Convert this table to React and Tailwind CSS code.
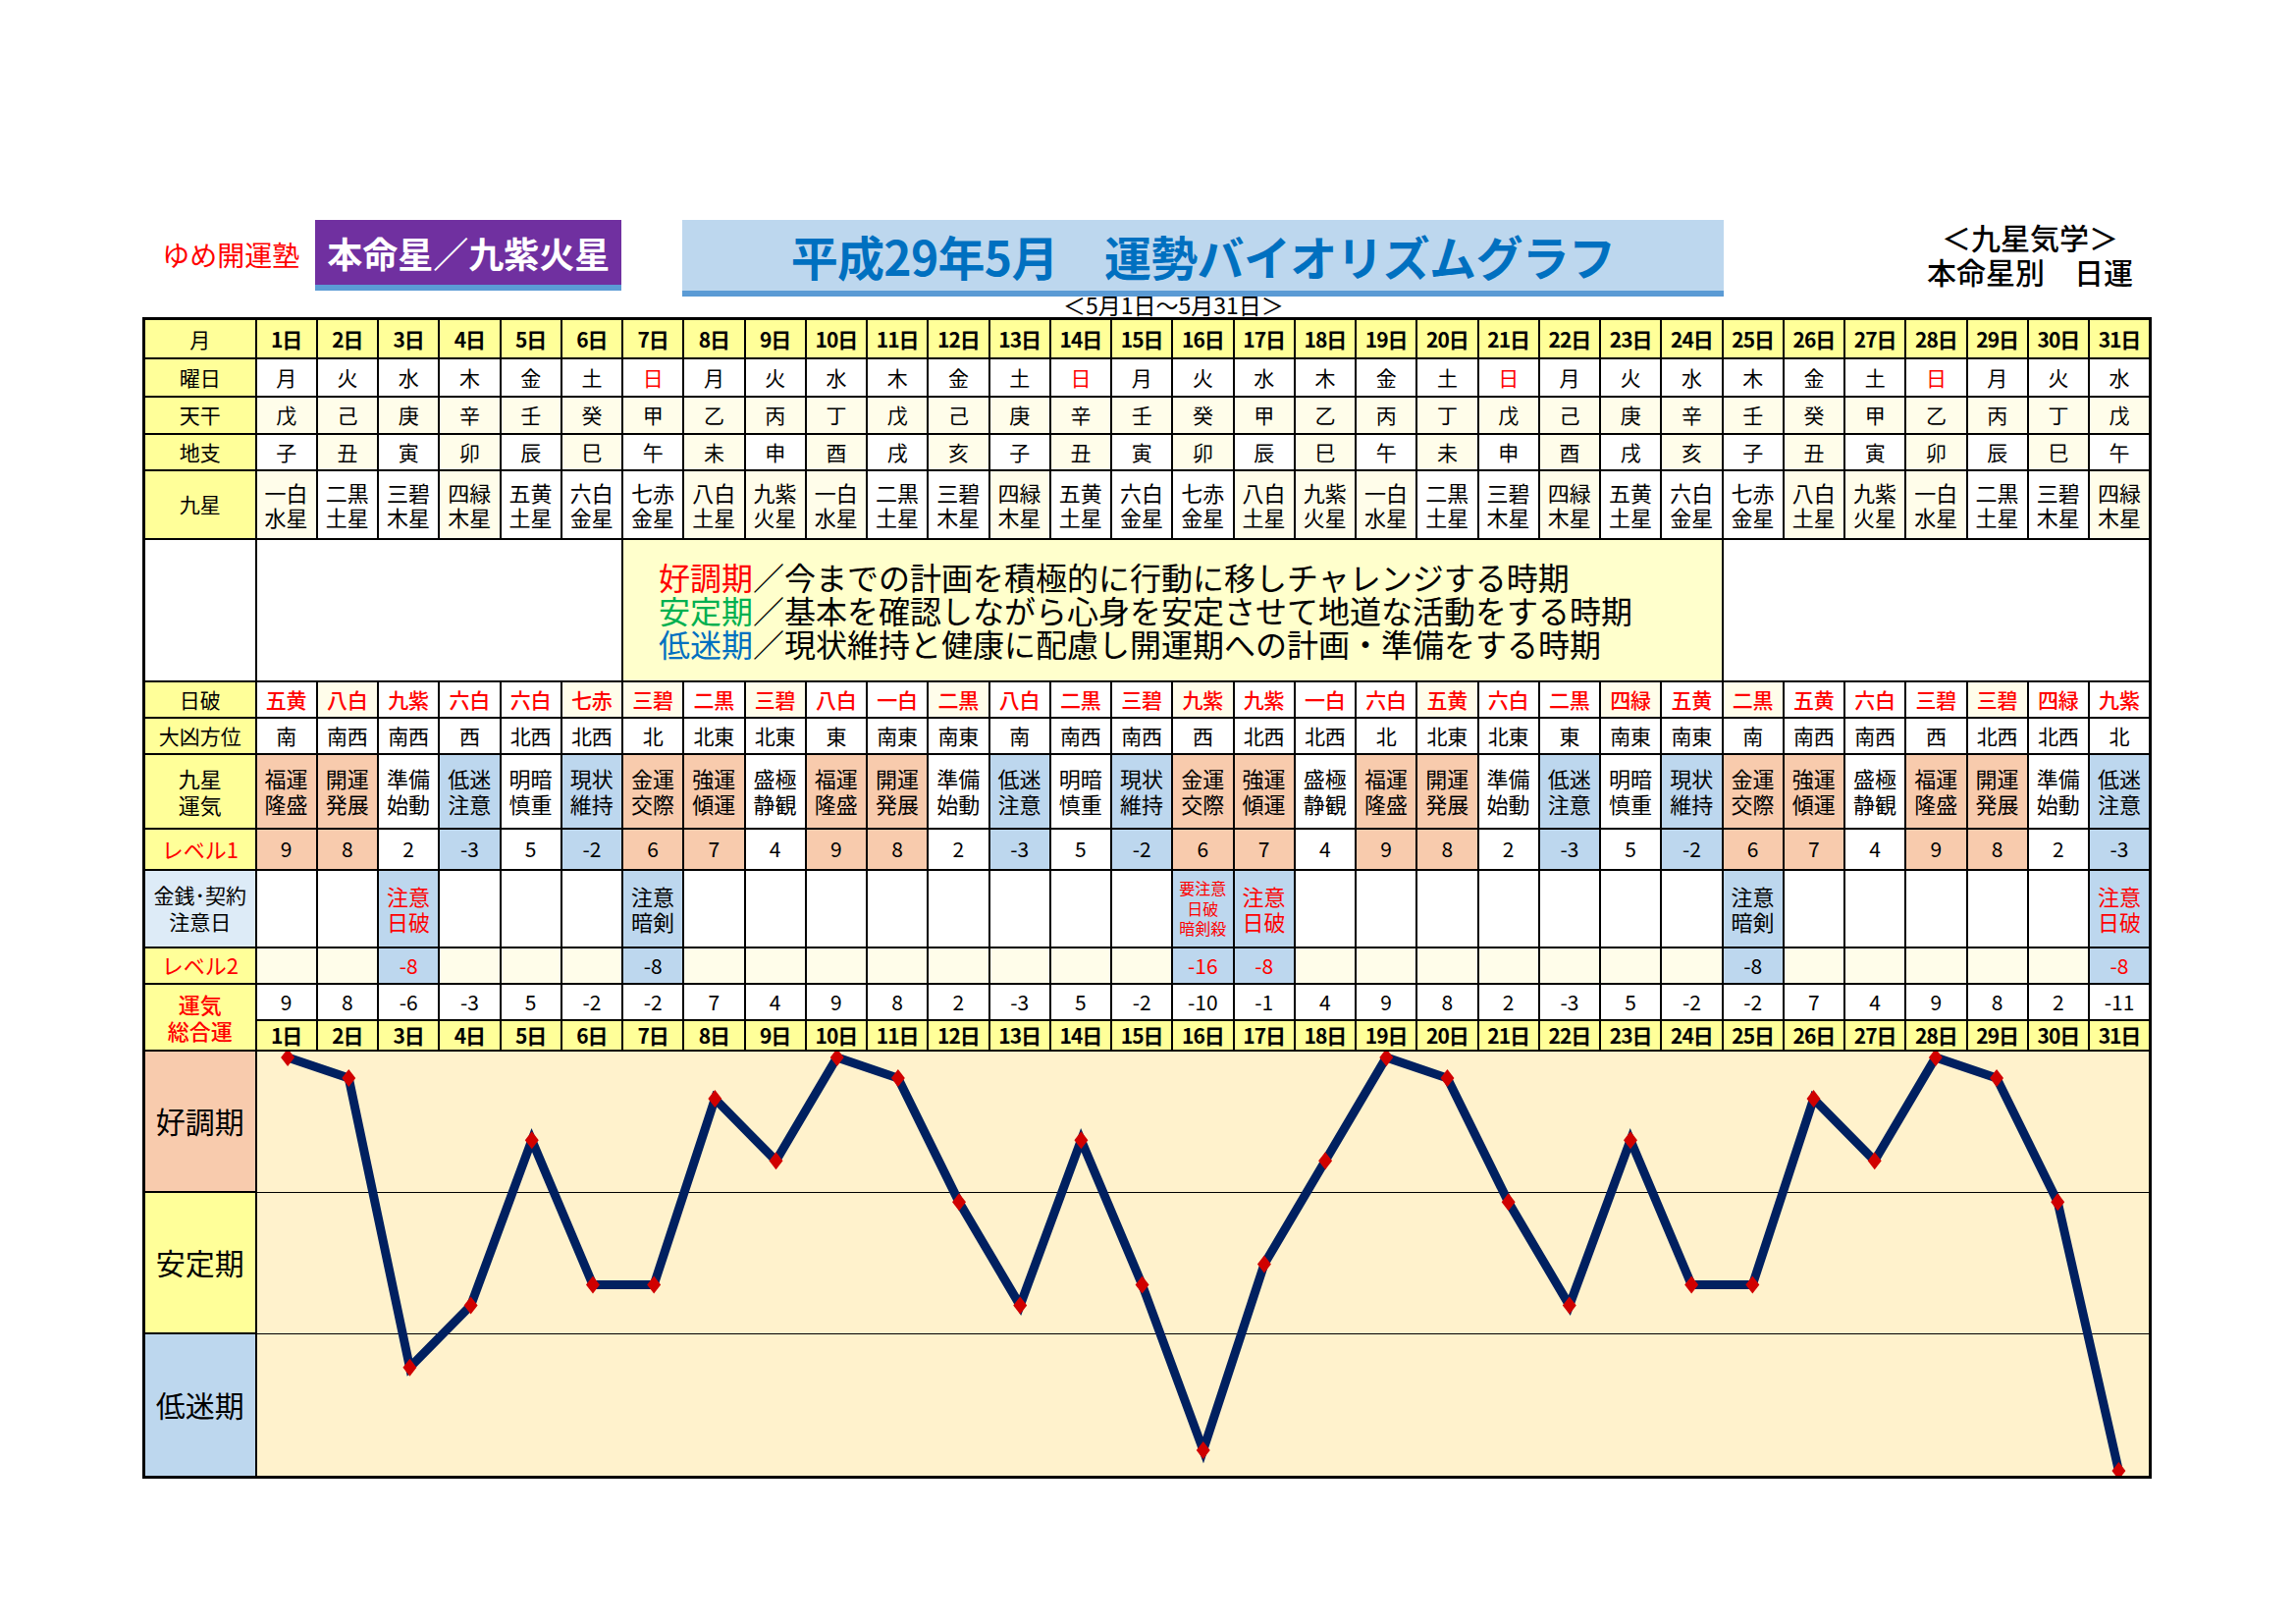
import React from 'react';

const DAYS = Array.from({ length: 31 }, (_, i) => i + 1);
const WEEK = ['月', '火', '水', '木', '金', '土', '日'];
const KAN = ['戊', '己', '庚', '辛', '壬', '癸', '甲', '乙', '丙', '丁'];
const SHI = ['子', '丑', '寅', '卯', '辰', '巳', '午', '未', '申', '酉', '戌', '亥'];
const STARS = [
  ['一白', '水星'], ['二黒', '土星'], ['三碧', '木星'], ['四緑', '木星'], ['五黄', '土星'],
  ['六白', '金星'], ['七赤', '金星'], ['八白', '土星'], ['九紫', '火星'],
];
const NIPPA = '五黄 八白 九紫 六白 六白 七赤 三碧 二黒 三碧 八白 一白 二黒 八白 二黒 三碧 九紫 九紫 一白 六白 五黄 六白 二黒 四緑 五黄 二黒 五黄 六白 三碧 三碧 四緑 九紫'.split(' ');
const HOUI = '南 南西 南西 西 北西 北西 北 北東 北東 東 南東 南東 南 南西 南西 西 北西 北西 北 北東 北東 東 南東 南東 南 南西 南西 西 北西 北西 北'.split(' ');
// 九星運気: two lines, tone, level1
const UNKI = [
  ['福運', '隆盛', 'good', 9], ['開運', '発展', 'good', 8], ['準備', '始動', '', 2],
  ['低迷', '注意', 'low', -3], ['明暗', '慎重', '', 5], ['現状', '維持', 'low', -2],
  ['金運', '交際', 'good', 6], ['強運', '傾運', 'good', 7], ['盛極', '静観', '', 4],
];
const CAUTION = {
  3: { lines: ['注意', '日破'], red: true, lv: -8 },
  7: { lines: ['注意', '暗剣'], red: false, lv: -8 },
  16: { lines: ['要注意', '日破', '暗剣殺'], red: true, small: true, lv: -16 },
  17: { lines: ['注意', '日破'], red: true, lv: -8 },
  25: { lines: ['注意', '暗剣'], red: false, lv: -8 },
  31: { lines: ['注意', '日破'], red: true, lv: -8 },
};
const TOTAL = [9, 8, -6, -3, 5, -2, -2, 7, 4, 9, 8, 2, -3, 5, -2, -10, -1, 4, 9, 8, 2, -3, 5, -2, -2, 7, 4, 9, 8, 2, -11];

// faint cream cells seen in the sheet
const CREAM_STAR = [1, 4, 8, 9, 10, 13, 17, 18, 19, 22, 26, 27, 28, 31];
const CREAM_NIPPA = [2, 6, 7, 9, 12, 16, 20, 23, 25, 29];

const cell = 'border-2 border-black text-center align-middle p-0';
const head = 'bg-[#ffff99]';
const tone = { good: 'bg-[#f8cbad]', low: 'bg-[#bdd7ee]', '': 'bg-white' };

function Chart() {
  const W = 1933;
  const step = W / 31;
  const pts = TOTAL.map((v, i) => [(i + 0.5) * step, 6 + (9 - v) * 21.05]);
  return (
    <div className="relative h-[432px] bg-[#fff2cc]">
      <div className="flex h-full flex-col">
        <div className="h-[144px] border-b-[1.5px] border-black" />
        <div className="h-[144px] border-b-[1.5px] border-black" />
        <div className="flex-1" />
      </div>
      <svg className="absolute inset-0 h-full w-full" viewBox={`0 0 ${W} 432`} preserveAspectRatio="none">
        <polyline
          points={pts.map((p) => p.join(',')).join(' ')}
          fill="none"
          stroke="#002060"
          strokeWidth="9"
          strokeLinejoin="miter"
        />
        {pts.map(([x, y], i) => (
          <polygon key={i} points={`${x},${y - 9} ${x + 7},${y} ${x},${y + 9} ${x - 7},${y}`} fill="#d00000" />
        ))}
      </svg>
    </div>
  );
}

export default function App() {
  return (
    <div className="min-h-[1654px] w-[2339px] bg-white pl-[145px] pt-[224px] font-['Noto_Sans_CJK_JP','Noto_Sans',sans-serif] text-black">
      {/* header */}
      <div className="grid h-[74px] w-[2047px] grid-cols-[114px_repeat(31,minmax(0,1fr))]">
        <div className="col-span-2 flex items-center justify-end pb-[8px] pr-[16px] text-[28px] text-[#ff0000]">ゆめ開運塾</div>
        <div className="col-span-5 flex h-[72px] items-center justify-center border-b-[6px] border-[#5b9bd5] bg-[#7030a0] text-[36px] font-bold text-white">
          本命星／九紫火星
        </div>
        <div />
        <div className="col-span-17 flex items-center justify-center border-b-[6px] border-[#5b9bd5] bg-[#bdd7ee] text-[48px] font-bold tracking-[-0.7px] text-[#0070c0]">
          平成29年5月　運勢バイオリズムグラフ
        </div>
        <div className="col-span-7 flex justify-end pr-[19px]">
          <div className="flex flex-col items-center text-[30px] font-medium leading-[35px]">
            <span>＜九星気学＞</span>
            <span>本命星別　日運</span>
          </div>
        </div>
      </div>
      <div className="flex h-[25px] items-center pl-[938px] text-[23px] leading-none">＜5月1日～5月31日＞</div>

      {/* table */}
      <table className="w-[2047px] table-fixed border-collapse border-[3px] border-black text-[21px] leading-tight">
        <colgroup>
          <col className="w-[114px]" />
          {DAYS.map((d) => (
            <col key={d} />
          ))}
        </colgroup>
        <tbody>
          <tr className="h-[40px]">
            <td className={`${cell} ${head}`}>月</td>
            {DAYS.map((d) => (
              <td key={d} className={`${cell} ${head} font-semibold tracking-tighter`}>{d}日</td>
            ))}
          </tr>
          <tr className="h-[39px]">
            <td className={`${cell} ${head}`}>曜日</td>
            {DAYS.map((d) => (
              <td key={d} className={`${cell} bg-white ${d % 7 === 0 ? 'text-[#ff0000]' : ''}`}>{WEEK[(d - 1) % 7]}</td>
            ))}
          </tr>
          <tr className="h-[38px]">
            <td className={`${cell} ${head}`}>天干</td>
            {DAYS.map((d) => (
              <td key={d} className={`${cell} bg-[#fffdea]`}>{KAN[(d - 1) % 10]}</td>
            ))}
          </tr>
          <tr className="h-[37px]">
            <td className={`${cell} ${head}`}>地支</td>
            {DAYS.map((d) => (
              <td key={d} className={`${cell} ${d % 2 === 0 ? 'bg-[#fffdea]' : 'bg-white'}`}>{SHI[(d - 1) % 12]}</td>
            ))}
          </tr>
          <tr className="h-[70px]">
            <td className={`${cell} ${head}`}>九星</td>
            {DAYS.map((d) => {
              const s = STARS[(d - 1) % 9];
              return (
                <td key={d} className={`${cell} text-[22px] leading-[1.12] ${CREAM_STAR.includes(d) ? 'bg-[#fffdea]' : 'bg-white'}`}>
                  {s[0]}
                  <br />
                  {s[1]}
                </td>
              );
            })}
          </tr>
          <tr className="h-[145px]">
            <td className={`${cell} bg-white`} />
            <td colSpan={6} className={`${cell} bg-white`} />
            <td colSpan={18} className={`${cell} bg-[#ffffcc] pl-[36px] text-left text-[32px] leading-[34px]`}>
              <div>
                <span className="text-[#ff0000]">好調期</span>／今までの計画を積極的に行動に移しチャレンジする時期
              </div>
              <div>
                <span className="text-[#00b050]">安定期</span>／基本を確認しながら心身を安定させて地道な活動をする時期
              </div>
              <div>
                <span className="text-[#0070c0]">低迷期</span>／現状維持と健康に配慮し開運期への計画・準備をする時期
              </div>
            </td>
            <td colSpan={7} className={`${cell} bg-white`} />
          </tr>
          <tr className="h-[37px]">
            <td className={`${cell} ${head}`}>日破</td>
            {DAYS.map((d) => (
              <td key={d} className={`${cell} font-medium text-[#ff0000] ${CREAM_NIPPA.includes(d) ? 'bg-[#fffdea]' : 'bg-white'}`}>
                {NIPPA[d - 1]}
              </td>
            ))}
          </tr>
          <tr className="h-[37px]">
            <td className={`${cell} ${head}`}>大凶方位</td>
            {DAYS.map((d) => (
              <td key={d} className={`${cell} bg-white`}>{HOUI[d - 1]}</td>
            ))}
          </tr>
          <tr className="h-[76px]">
            <td className={`${cell} ${head} text-[22px] leading-[1.2]`}>
              九星
              <br />
              運気
            </td>
            {DAYS.map((d) => {
              const u = UNKI[(d - 1) % 9];
              return (
                <td key={d} className={`${cell} ${tone[u[2]]} text-[22px] leading-[1.18]`}>
                  {u[0]}
                  <br />
                  {u[1]}
                </td>
              );
            })}
          </tr>
          <tr className="h-[42px]">
            <td className={`${cell} ${head} text-[22px] text-[#ff0000]`}>レベル1</td>
            {DAYS.map((d) => {
              const u = UNKI[(d - 1) % 9];
              return (
                <td key={d} className={`${cell} ${tone[u[2]]}`}>{u[3]}</td>
              );
            })}
          </tr>
          <tr className="h-[79px]">
            <td className={`${cell} bg-[#ddebf7] text-[21px] leading-[1.3]`}>
              金銭･契約
              <br />
              注意日
            </td>
            {DAYS.map((d) => {
              const c = CAUTION[d];
              if (!c) return <td key={d} className={`${cell} bg-white`} />;
              return (
                <td
                  key={d}
                  className={`${cell} bg-[#bdd7ee] ${c.red ? 'text-[#ff0000]' : ''} ${c.small ? 'text-[16px] leading-[1.3]' : 'text-[22px] leading-[1.2]'}`}
                >
                  {c.lines.map((l) => (
                    <div key={l}>{l}</div>
                  ))}
                </td>
              );
            })}
          </tr>
          <tr className="h-[37px]">
            <td className={`${cell} ${head} text-[22px] text-[#ff0000]`}>レベル2</td>
            {DAYS.map((d) => {
              const c = CAUTION[d];
              if (!c) return <td key={d} className={`${cell} bg-[#fffdea]`} />;
              return (
                <td key={d} className={`${cell} bg-[#bdd7ee] ${c.red ? 'text-[#ff0000]' : ''}`}>{c.lv}</td>
              );
            })}
          </tr>
          <tr className="h-[37px]">
            <td rowSpan={2} className={`${cell} ${head} text-[22px] font-medium leading-[1.2] text-[#ff0000]`}>
              運気
              <br />
              総合運
            </td>
            {DAYS.map((d) => (
              <td key={d} className={`${cell} bg-white`}>{TOTAL[d - 1]}</td>
            ))}
          </tr>
          <tr className="h-[31px]">
            {DAYS.map((d) => (
              <td key={d} className={`${cell} ${head} font-semibold tracking-tighter`}>{d}日</td>
            ))}
          </tr>
          <tr>
            <td className={`${cell}`}>
              <div className="flex h-[432px] flex-col text-[30px]">
                <div className="flex h-[144px] items-center justify-center border-b-2 border-black bg-[#f8cbad]">好調期</div>
                <div className="flex h-[144px] items-center justify-center border-b-2 border-black bg-[#ffff99]">安定期</div>
                <div className="flex flex-1 items-center justify-center bg-[#bdd7ee]">低迷期</div>
              </div>
            </td>
            <td colSpan={31} className={`${cell}`}>
              <Chart />
            </td>
          </tr>
        </tbody>
      </table>
    </div>
  );
}
